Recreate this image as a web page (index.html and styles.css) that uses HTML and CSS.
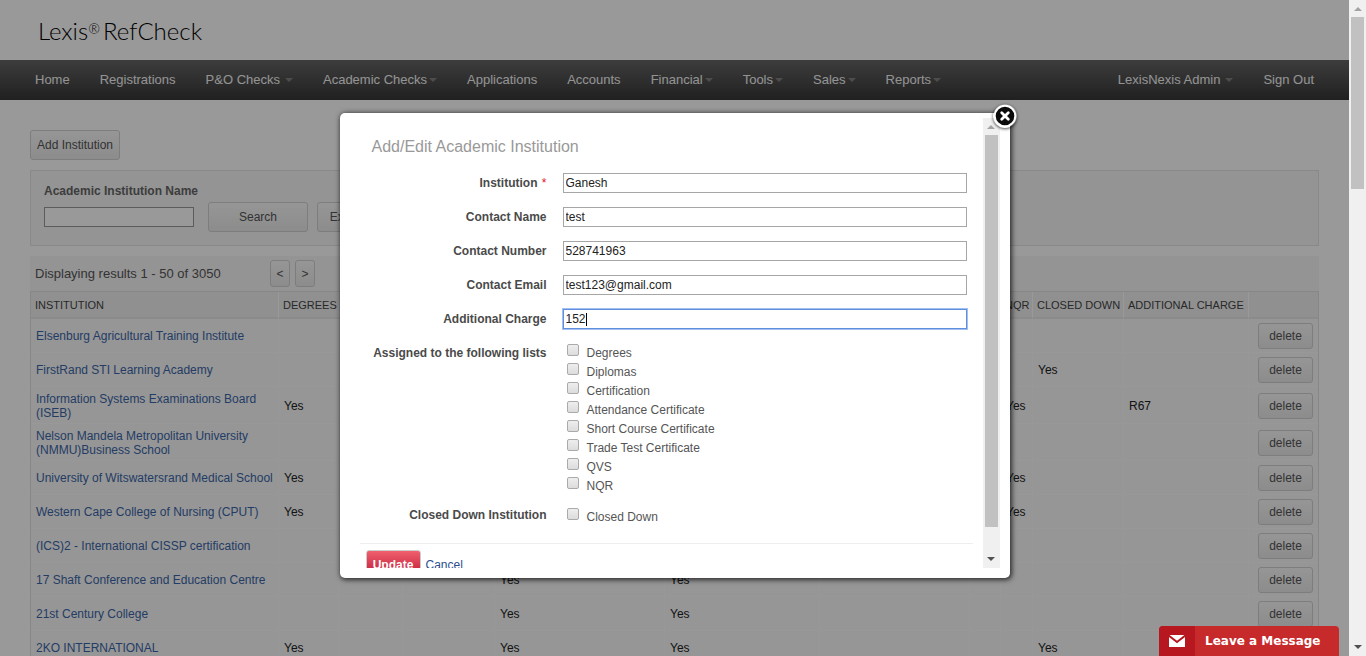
FILE: index.html
```html
<!DOCTYPE html>
<html lang="en">
<head>
<meta charset="utf-8">
<title>Lexis RefCheck</title>
<link rel="stylesheet" href="styles.css">
</head>
<body>
<div class="window">
  <div class="viewport">
    <div class="page">
      <header class="brand">Lexis<sup>®</sup>RefCheck</header>
      <nav class="nav">
        <a href="#">Home</a>
        <a href="#">Registrations</a>
        <a href="#" class="spaced">P&amp;O Checks<i class="caret"></i></a>
        <a href="#">Academic Checks<i class="caret"></i></a>
        <a href="#">Applications</a>
        <a href="#">Accounts</a>
        <a href="#">Financial<i class="caret"></i></a>
        <a href="#">Tools<i class="caret"></i></a>
        <a href="#">Sales<i class="caret"></i></a>
        <a href="#">Reports<i class="caret"></i></a>
        <a href="#" class="spaced account">LexisNexis Admin<i class="caret"></i></a>
        <a href="#">Sign Out</a>
      </nav>
      <main class="content">
        <button type="button" class="btn add">Add Institution</button>
        <form class="search">
          <label for="name">Academic Institution Name</label>
          <div class="search-row">
            <input id="name" type="text">
            <button type="button" class="btn wide">Search</button>
            <button type="button" class="btn export">Export to Excel</button>
          </div>
        </form>
        <section class="results">
          <div class="pager">
            <span class="count">Displaying results 1 - 50 of 3050</span>
            <button type="button" class="btn page-btn">&lt;</button>
            <button type="button" class="btn page-btn">&gt;</button>
          </div>
          <table class="grid">
            <colgroup><col class="c-name"><col class="c-deg"><col class="c-dip"><col class="c-cert"><col class="c-att"><col class="c-short"><col class="c-trade"><col class="c-qvs"><col class="c-nqr"><col class="c-closed"><col class="c-charge"><col class="c-act"></colgroup>
            <thead>
              <tr><th>INSTITUTION</th><th>DEGREES</th><th>DIPLOMAS</th><th>CERTIFICATION</th><th>ATTENDANCE CERTIFICATE</th><th>SHORT COURSE CERTIFICATE</th><th>TRADE TEST</th><th>QVS</th><th>NQR</th><th>CLOSED DOWN</th><th>ADDITIONAL CHARGE</th><th></th></tr>
            </thead>
            <tbody>
              <tr><td><a href="#">Elsenburg Agricultural Training Institute</a></td><td></td><td></td><td></td><td></td><td></td><td></td><td></td><td></td><td></td><td></td><td><button type="button" class="btn del">delete</button></td></tr>
              <tr><td><a href="#">FirstRand STI Learning Academy</a></td><td></td><td></td><td></td><td></td><td></td><td></td><td></td><td></td><td>Yes</td><td></td><td><button type="button" class="btn del">delete</button></td></tr>
              <tr class="tall"><td><a href="#">Information Systems Examinations Board (ISEB)</a></td><td>Yes</td><td></td><td></td><td></td><td></td><td></td><td></td><td>Yes</td><td></td><td>R67</td><td><button type="button" class="btn del">delete</button></td></tr>
              <tr class="tall"><td><a href="#">Nelson Mandela Metropolitan University (NMMU)Business School</a></td><td></td><td></td><td></td><td></td><td></td><td></td><td></td><td></td><td></td><td></td><td><button type="button" class="btn del">delete</button></td></tr>
              <tr><td><a href="#">University of Witswatersrand Medical School</a></td><td>Yes</td><td></td><td></td><td></td><td></td><td></td><td></td><td>Yes</td><td></td><td></td><td><button type="button" class="btn del">delete</button></td></tr>
              <tr><td><a href="#">Western Cape College of Nursing (CPUT)</a></td><td>Yes</td><td></td><td></td><td></td><td></td><td></td><td></td><td>Yes</td><td></td><td></td><td><button type="button" class="btn del">delete</button></td></tr>
              <tr><td><a href="#">(ICS)2 - International CISSP certification</a></td><td></td><td></td><td></td><td></td><td></td><td></td><td></td><td></td><td></td><td></td><td><button type="button" class="btn del">delete</button></td></tr>
              <tr><td><a href="#">17 Shaft Conference and Education Centre</a></td><td></td><td></td><td></td><td>Yes</td><td>Yes</td><td></td><td></td><td></td><td></td><td></td><td><button type="button" class="btn del">delete</button></td></tr>
              <tr><td><a href="#">21st Century College</a></td><td></td><td></td><td></td><td>Yes</td><td>Yes</td><td></td><td></td><td></td><td></td><td></td><td><button type="button" class="btn del">delete</button></td></tr>
              <tr><td><a href="#">2KO INTERNATIONAL</a></td><td>Yes</td><td></td><td></td><td>Yes</td><td>Yes</td><td></td><td></td><td></td><td>Yes</td><td></td><td></td></tr>
            </tbody>
          </table>
        </section>
      </main>
    </div>
    <div class="overlay">
      <div class="modal" role="dialog" aria-labelledby="dialog-title">
        <div class="frame">
          <form class="editor">
            <h1 id="dialog-title">Add/Edit Academic Institution</h1>
            <div class="fields">
              <label for="inst">Institution <span class="req">*</span></label><input id="inst" type="text" value="Ganesh">
              <label for="cname">Contact Name</label><input id="cname" type="text" value="test">
              <label for="cnum">Contact Number</label><input id="cnum" type="text" value="528741963">
              <label for="cmail">Contact Email</label><input id="cmail" type="text" value="test123@gmail.com">
              <label for="charge">Additional Charge</label><input id="charge" class="active" type="text" value="152">
              <span class="group">Assigned to the following lists</span>
              <div class="checks">
                <label><input type="checkbox"><span>Degrees</span></label>
                <label><input type="checkbox"><span>Diplomas</span></label>
                <label><input type="checkbox"><span>Certification</span></label>
                <label><input type="checkbox"><span>Attendance Certificate</span></label>
                <label><input type="checkbox"><span>Short Course Certificate</span></label>
                <label><input type="checkbox"><span>Trade Test Certificate</span></label>
                <label><input type="checkbox"><span>QVS</span></label>
                <label><input type="checkbox"><span>NQR</span></label>
              </div>
              <span class="group">Closed Down Institution</span>
              <div class="checks">
                <label><input type="checkbox"><span>Closed Down</span></label>
              </div>
            </div>
            <div class="actions">
              <button type="button" class="update">Update</button>
              <a href="#">Cancel</a>
            </div>
          </form>
          <div class="scrollbar"><i class="up"></i><i class="thumb modal-thumb"></i><i class="down"></i></div>
        </div>
        <button type="button" class="close" aria-label="Close">
          <svg viewBox="0 0 24 24" width="24" height="24"><circle cx="12" cy="12" r="10.3" fill="#0a0a0a" stroke="#fff" stroke-width="2"/><path d="M8.7 8.7l6.6 6.6M15.3 8.7l-6.6 6.6" stroke="#fff" stroke-width="2.8" stroke-linecap="round"/></svg>
        </button>
      </div>
    </div>
    <button type="button" class="chat">
      <span class="mail"><svg viewBox="0 0 18 14" width="18" height="14"><path d="M1 1h16v12H1z" fill="#fff"/><path d="M0 1l9 7 9-7" fill="none" stroke="#b7171f" stroke-width="2"/></svg></span>
      <span class="chat-text">Leave a Message</span>
    </button>
  </div>
  <div class="scrollbar"><i class="up"></i><i class="thumb page-thumb"></i><i class="down"></i></div>
</div>
</body>
</html>
```
FILE: styles.css
```css
* { box-sizing: border-box; }
body { margin: 0; font: 12px/14px "Liberation Sans", Arial, sans-serif; color: #222; }
a { color: #3a66a8; text-decoration: none; }
button, input { font: inherit; }

.window { display: flex; height: 100vh; overflow: hidden; }
.viewport { position: relative; flex: 1; min-width: 0; overflow: hidden; }
.page { min-height: 100%; background: #fff; }

.brand { height: 60px; padding: 18px 0 0 38px; font: 300 24px/26px Lato, sans-serif; color: #000; }
.brand sup { margin-right: 3px; font-size: 14px; line-height: 0; vertical-align: 6px; }

.nav { display: flex; align-items: center; height: 40px; padding: 0 35px; gap: 30px; background: linear-gradient(#666, #363636); }
.nav a { display: flex; align-items: center; gap: 2px; color: #f6f6f6; font-size: 13px; line-height: 16px; white-space: nowrap; }
.nav .spaced { gap: 5px; }
.nav .account { margin-left: auto; }
.caret { border: 4px solid transparent; border-top-color: #808080; border-bottom: 0; }

.content { padding: 30px; }
.btn { border: 1px solid #d0d0d0; border-radius: 3px; background: linear-gradient(#fafafa, #eaeaea); color: #555; padding: 0; text-align: center; }
.add { display: block; width: 90px; height: 30px; }
.search { margin-top: 10px; height: 76px; padding: 13px; border: 1px solid #e4e4e4; background: #f7f7f7; }
.search label { display: block; font-weight: bold; color: #666; }
.search-row { display: flex; align-items: center; margin-top: 4px; }
.search-row input { width: 150px; height: 20px; border: 1px solid #999; background: #fff; margin-right: 14px; }
.wide { width: 100px; height: 30px; margin-right: 9px; }
.export { width: 106px; height: 30px; }

.results { margin-top: 10px; }
.pager { display: flex; align-items: center; height: 35px; padding-left: 5px; background: #f7f7f7; }
.count { width: 235px; font-size: 13px; color: #555; }
.page-btn { width: 20px; height: 27px; margin-right: 5px; }
.grid { width: 100%; table-layout: fixed; border-collapse: separate; border-spacing: 0; border: 1px solid #e2e2e2; background: #fafafa; }
.c-name { width: 248px; } .c-deg { width: 60px; } .c-dip { width: 64px; } .c-cert { width: 92px; } .c-att { width: 170px; }
.c-short { width: 155px; } .c-trade { width: 150px; } .c-qvs { width: 31px; } .c-nqr { width: 32px; } .c-closed { width: 91px; } .c-charge { width: 125px; }
.grid th { height: 27px; padding: 0 4px; text-align: left; font-size: 11px; font-weight: normal; color: #444; background: #f1f1f1; border-right: 1px solid #fff; border-bottom: 2px solid #e8e8e8; white-space: nowrap; overflow: hidden; }
.grid td { height: 34px; padding: 0 5px; border-right: 1px solid #fefefe; border-bottom: 1px solid #fefefe; }
.grid td:last-child, .grid th:last-child { border-right: 0; }
.grid td:last-child { text-align: right; }
.grid .tall td { height: 37px; padding-top: 2px; }
.del { width: 55px; height: 26px; }

.overlay { position: absolute; inset: 0; display: flex; justify-content: center; align-items: flex-start; padding-top: 113px; background: rgba(0, 0, 0, .4); }
.modal { position: relative; width: 670px; height: 465px; padding: 5px 10px 10px 20px; border-radius: 5px; background: #fff; box-shadow: 1px 1px 5px 1px rgba(0, 0, 0, .7); }
.frame { display: flex; height: 100%; overflow: hidden; }
.editor { flex: 1; padding-right: 10px; }
.editor h1 { margin: 20px 0 17px 12px; font-size: 16px; line-height: 18px; font-weight: normal; color: #999; }
.fields { display: grid; grid-template-columns: 187px 1fr; column-gap: 16px; row-gap: 14px; padding-right: 6px; }
.fields > label, .group { text-align: right; font-weight: bold; color: #4a4a4a; line-height: 20px; }
.req { color: #e8112d; margin-left: 1px; font-weight: normal; }
.fields > input { width: 100%; height: 20px; padding: 0 2px; border: 1px solid #a6a6a6; background: #fff; color: #222; }
.fields > input.active { outline: 1px solid #a3c0f5; border-color: #5f8fdc; background: linear-gradient(#000, #000) 22px 3px / 1px 13px no-repeat #fff; }
.checks { padding: 1px 0 0 4px; }
.checks label { display: flex; align-items: flex-start; gap: 8px; height: 19px; color: #555; }
.checks span { padding-top: 2px; }
.checks input { appearance: none; width: 12px; height: 12px; margin: 0; border: 1px solid #aaa; border-radius: 2px; background: linear-gradient(#eee, #dcdcdc); }
.checks + .group { margin-top: -5px; }
.checks + .group + .checks { margin-top: -3px; }
.actions { display: flex; align-items: flex-start; gap: 5px; margin-top: 16px; padding: 6px; border-top: 1px solid #eee; }
.actions a { margin-top: 8px; color: #2a4d8f; }
.update { width: 55px; height: 30px; padding: 0; border: 1px solid #ccc; border-radius: 3px; background: linear-gradient(#f0606f, #b8122c); color: #fff; font-weight: bold; }
.close { position: absolute; top: -9px; right: -7px; width: 24px; height: 24px; padding: 0; border: 0; background: none; border-radius: 12px; box-shadow: 0 1px 3px rgba(0, 0, 0, .7); }
.close svg { display: block; }

.scrollbar { display: flex; flex-direction: column; align-items: center; width: 17px; flex: none; padding: 7px 0; background: #f0f0f0; }
.up { border: 4px solid transparent; border-bottom-color: #a3a3a3; border-top: 0; margin-bottom: 6px; }
.down { border: 4px solid transparent; border-top-color: #505050; border-bottom: 0; margin-top: auto; }
.thumb { width: 13px; background: #c1c1c1; }
.page-thumb { height: 172px; }
.modal-thumb { height: 392px; }

.chat { position: absolute; right: 10px; bottom: 0; display: flex; width: 180px; height: 30px; padding: 0; border: 0; border-radius: 4px 4px 0 0; overflow: hidden; background: #c62a2a; color: #fff; font: bold 12px/30px "DejaVu Sans", sans-serif; }
.mail { display: flex; align-items: center; justify-content: center; width: 36px; height: 30px; background: #b7171f; }
.chat-text { padding-left: 10px; }
```
